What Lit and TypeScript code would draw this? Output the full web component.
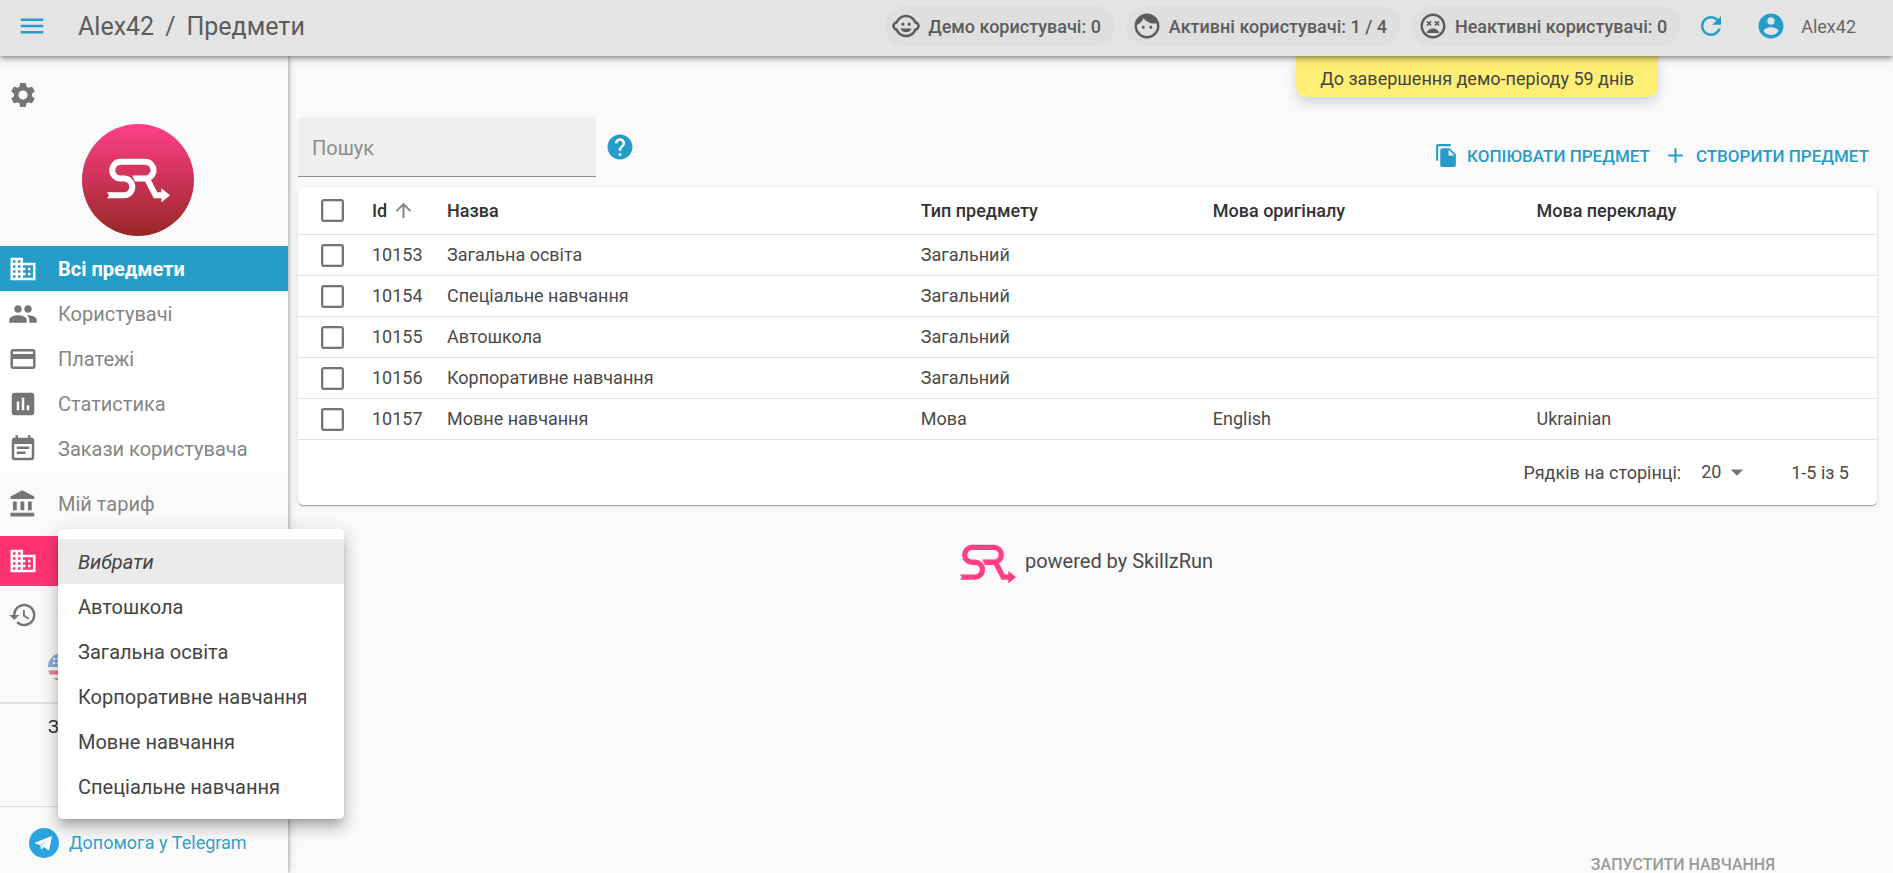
import { LitElement, html, css, svg, nothing } from "lit";
import { customElement, property, state } from "lit/decorators.js";
import { classMap } from "lit/directives/class-map.js";

const ICONS: Record<string, string> = {
  menu: "M3 18h18v-2H3v2zm0-5h18v-2H3v2zm0-7v2h18V6H3z",
  settings:
    "M19.14 12.94c.04-.3.06-.61.06-.94 0-.32-.02-.64-.07-.94l2.03-1.58c.18-.14.23-.41.12-.61l-1.92-3.32c-.12-.22-.37-.29-.59-.22l-2.39.96c-.5-.38-1.03-.7-1.62-.94l-.36-2.54c-.04-.24-.24-.41-.48-.41h-3.84c-.24 0-.43.17-.47.41l-.36 2.54c-.59.24-1.13.57-1.62.94l-2.39-.96c-.22-.08-.47 0-.59.22L2.74 8.87c-.12.21-.08.47.12.61l2.03 1.58c-.05.3-.09.63-.09.94s.02.64.07.94l-2.03 1.58c-.18.14-.23.41-.12.61l1.92 3.32c.12.22.37.29.59.22l2.39-.96c.5.38 1.03.7 1.62.94l.36 2.54c.05.24.24.41.48.41h3.84c.24 0 .44-.17.47-.41l.36-2.54c.59-.24 1.13-.56 1.62-.94l2.39.96c.22.08.47 0 .59-.22l1.92-3.32c.12-.22.07-.47-.12-.61l-2.01-1.58zM12 15.6c-1.98 0-3.6-1.62-3.6-3.6s1.62-3.6 3.6-3.6 3.6 1.62 3.6 3.6-1.62 3.6-3.6 3.6z",
  business:
    "M12 7V3H2v18h20V7H12zM6 19H4v-2h2v2zm0-4H4v-2h2v2zm0-4H4V9h2v2zm0-4H4V5h2v2zm4 12H8v-2h2v2zm0-4H8v-2h2v2zm0-4H8V9h2v2zm0-4H8V5h2v2zm10 12h-8v-2h2v-2h-2v-2h2v-2h-2V9h8v10zm-2-8h-2v2h2v-2zm0 4h-2v2h2v-2z",
  people:
    "M16 11c1.66 0 2.99-1.34 2.99-3S17.66 5 16 5c-1.66 0-3 1.34-3 3s1.34 3 3 3zm-8 0c1.66 0 2.99-1.34 2.99-3S9.66 5 8 5C6.34 5 5 6.34 5 8s1.34 3 3 3zm0 2c-2.33 0-7 1.17-7 3.5V19h14v-2.5c0-2.33-4.67-3.5-7-3.5zm8 0c-.29 0-.62.02-.97.05 1.16.84 1.97 1.97 1.97 3.45V19h6v-2.5c0-2.33-4.67-3.5-7-3.5z",
  payment:
    "M20 4H4c-1.11 0-1.99.89-1.99 2L2 18c0 1.11.89 2 2 2h16c1.11 0 2-.89 2-2V6c0-1.11-.89-2-2-2zm0 14H4v-6h16v6zm0-10H4V6h16v2z",
  assessment:
    "M19 3H5c-1.1 0-2 .9-2 2v14c0 1.1.9 2 2 2h14c1.1 0 2-.9 2-2V5c0-1.1-.9-2-2-2zM9 17H7v-7h2v7zm4 0h-2V7h2v10zm4 0h-2v-4h2v4z",
  eventNote:
    "M17 10H7v2h10v-2zm2-7h-1V1h-2v2H8V1H6v2H5c-1.11 0-1.99.9-1.99 2L3 19c0 1.1.89 2 2 2h14c1.1 0 2-.9 2-2V5c0-1.1-.9-2-2-2zm0 16H5V8h14v11zm-5-5H7v2h7v-2z",
  bank: "M4 10v7h3v-7H4zm6 0v7h3v-7h-3zM2 22h19v-3H2v3zm14-12v7h3v-7h-3zm-4.5-9L2 6v2h19V6l-9.5-5z",
  history:
    "M13 3c-4.97 0-9 4.03-9 9H1l3.89 3.89.07.14L9 12H6c0-3.87 3.13-7 7-7s7 3.13 7 7-3.13 7-7 7c-1.93 0-3.68-.79-4.94-2.06l-1.42 1.42C8.27 19.99 10.51 21 13 21c4.97 0 9-4.03 9-9s-4.03-9-9-9zm-1 5v5l4.28 2.54.72-1.21-3.5-2.08V8H12z",
  childCare:
    "M14.5 9.25a1.25 1.25 0 100 2.5 1.25 1.25 0 000-2.5zm-5 0a1.25 1.25 0 100 2.5 1.25 1.25 0 000-2.5zM22.94 12.66c.04-.21.06-.43.06-.66s-.02-.45-.06-.66c-.25-1.51-1.36-2.74-2.81-3.17-.53-1.12-1.28-2.1-2.19-2.91C16.36 3.85 14.28 3 12 3s-4.36.85-5.94 2.26c-.92.81-1.67 1.8-2.19 2.91-1.45.43-2.56 1.65-2.81 3.17-.04.21-.06.43-.06.66s.02.45.06.66c.25 1.51 1.36 2.74 2.81 3.17.52 1.11 1.27 2.09 2.17 2.89C7.62 20.14 9.71 21 12 21s4.38-.86 5.97-2.28c.9-.8 1.65-1.79 2.17-2.89 1.44-.43 2.55-1.65 2.8-3.17zM19 14c-.1 0-.19-.02-.29-.03-.2.67-.49 1.29-.86 1.86C16.6 17.74 14.45 19 12 19s-4.6-1.26-5.85-3.17c-.37-.57-.66-1.19-.86-1.86-.1.01-.19.03-.29.03-1.1 0-2-.9-2-2s.9-2 2-2c.1 0 .19.02.29.03.2-.67.49-1.29.86-1.86C7.4 6.26 9.55 5 12 5s4.6 1.26 5.85 3.17c.37.57.66 1.19.86 1.86.1-.01.19-.03.29-.03 1.1 0 2 .9 2 2s-.9 2-2 2zM7.5 14c.76 1.77 2.49 3 4.5 3s3.74-1.23 4.5-3h-9z",
  face: "M9 11.75c-.69 0-1.25.56-1.25 1.25s.56 1.25 1.25 1.25 1.25-.56 1.25-1.25-.56-1.25-1.25-1.25zm6 0c-.69 0-1.25.56-1.25 1.25s.56 1.25 1.25 1.25 1.25-.56 1.25-1.25-.56-1.25-1.25-1.25zM12 2C6.48 2 2 6.48 2 12s4.48 10 10 10 10-4.48 10-10S17.52 2 12 2zm0 18c-4.41 0-8-3.59-8-8 0-.29.02-.58.05-.86 2.36-1.05 4.23-2.98 5.21-5.37C11.07 8.33 14.05 10 17.42 10c.78 0 1.53-.09 2.25-.26.21.71.33 1.47.33 2.26 0 4.41-3.59 8-8 8z",
  dissatisfied:
    "M11.99 2C6.47 2 2 6.48 2 12s4.47 10 9.99 10C17.52 22 22 17.52 22 12S17.52 2 11.99 2zM12 20c-4.42 0-8-3.58-8-8s3.58-8 8-8 8 3.58 8 8-3.58 8-8 8zM17.3 8.7l-.9-.9-1.2 1.2-1.2-1.2-.9.9 1.2 1.2-1.2 1.2.9.9 1.2-1.2 1.2 1.2.9-.9-1.2-1.2zM10.9 8.7l-.9-.9-1.2 1.2-1.2-1.2-.9.9 1.2 1.2-1.2 1.2.9.9 1.2-1.2 1.2 1.2.9-.9-1.2-1.2zM12 14c-2.33 0-4.31 1.46-5.11 3.5h10.22c-.8-2.04-2.78-3.5-5.11-3.5z",
  refresh:
    "M17.65 6.35C16.2 4.9 14.21 4 12 4c-4.42 0-7.99 3.58-7.99 8s3.57 8 7.99 8c3.73 0 6.84-2.55 7.73-6h-2.08c-.82 2.33-3.04 4-5.65 4-3.31 0-6-2.69-6-6s2.69-6 6-6c1.66 0 3.14.69 4.22 1.78L13 11h7V4l-2.35 2.35z",
  account:
    "M12 2C6.48 2 2 6.48 2 12s4.48 10 10 10 10-4.48 10-10S17.52 2 12 2zm0 3c1.66 0 3 1.34 3 3s-1.34 3-3 3-3-1.34-3-3 1.34-3 3-3zm0 14.2c-2.5 0-4.71-1.28-6-3.22.03-1.99 4-3.08 6-3.08 1.99 0 5.97 1.09 6 3.08-1.29 1.94-3.5 3.22-6 3.22z",
  help: "M12 2C6.48 2 2 6.48 2 12s4.48 10 10 10 10-4.48 10-10S17.52 2 12 2zm1 17h-2v-2h2v2zm2.07-7.75l-.9.92C13.45 12.9 13 13.5 13 15h-2v-.5c0-1.1.45-2.1 1.17-2.83l1.24-1.26c.37-.36.59-.86.59-1.41 0-1.1-.9-2-2-2s-2 .9-2 2H8c0-2.21 1.79-4 4-4s4 1.79 4 4c0 .88-.36 1.68-.93 2.25z",
  copy: "M16 1H4c-1.1 0-2 .9-2 2v14h2V3h12V1zm-1 4l6 6v10c0 1.1-.9 2-2 2H7.99C6.89 23 6 22.1 6 21l.01-14c0-1.1.89-2 1.99-2h7zm-1 7h5.5L14 6.5V12z",
  add: "M19 13h-6v6h-2v-6H5v-2h6V5h2v6h6v2z",
  arrowUp: "M4 12l1.41 1.41L11 7.83V20h2V7.83l5.58 5.59L20 12l-8-8-8 8z",
  dropDown: "M7 10l5 5 5-5z",
};

@customElement("ui-icon")
class UiIcon extends LitElement {
  @property() name = "";
  @property({ type: Number }) size = 30;

  static styles = css`
    :host {
      display: inline-flex;
      flex: none;
    }
    svg {
      display: block;
      fill: currentColor;
    }
  `;

  render() {
    return html`<svg viewBox="0 0 24 24" width=${this.size} height=${this.size} aria-hidden="true">
      ${svg`<path d=${ICONS[this.name] ?? ""}></path>`}
    </svg>`;
  }
}

@customElement("brand-mark")
class BrandMark extends LitElement {
  static styles = css`
    :host {
      display: block;
    }
    svg {
      display: block;
      width: 100%;
    }
    .line {
      fill: none;
      stroke: currentColor;
      stroke-width: 18;
    }
    .solid {
      fill: currentColor;
    }
  `;

  render() {
    return html`<svg viewBox="96 112 190 134" aria-hidden="true">
      <path
        class="line"
        d="M108 224.5H147a25.25 25.25 0 0 0 0-50.5H137a25.25 25.25 0 0 1 0-50.5H211a25.25 25.25 0 0 1 0 50.5H182"
      ></path>
      <path class="line" d="M214 170L242.5 224.5H264"></path>
      <path class="solid" d="M96 215.5H110V233.5H96L102 225ZM260 203L286 224.5L260 246ZM172 165H184V183H180Z"></path>
    </svg>`;
  }
}

interface NavItem {
  icon: string;
  label: string;
}

@customElement("app-sidebar")
class AppSidebar extends LitElement {
  @state() private active = 0;

  private items: NavItem[] = [
    { icon: "business", label: "Всі предмети" },
    { icon: "people", label: "Користувачі" },
    { icon: "payment", label: "Платежі" },
    { icon: "assessment", label: "Статистика" },
    { icon: "eventNote", label: "Закази користувача" },
  ];

  private options = [
    "Вибрати",
    "Автошкола",
    "Загальна освіта",
    "Корпоративне навчання",
    "Мовне навчання",
    "Спеціальне навчання",
  ];

  static styles = css`
    :host {
      display: block;
      position: relative;
      z-index: 1;
      background: #fafafa;
      color: #757575;
      box-shadow: 1px 0 3px rgba(0, 0, 0, 0.25), 2px 0 10px rgba(0, 0, 0, 0.1);
    }
    button {
      font: inherit;
      color: inherit;
      background: none;
      border: 0;
      padding: 0;
      cursor: pointer;
    }
    a {
      color: inherit;
      text-decoration: none;
    }
    .gear {
      display: flex;
      padding: 24px 8px 0;
    }
    .logo {
      display: grid;
      place-items: center;
      width: 112px;
      height: 112px;
      margin: 14px 0 10px 82px;
      border-radius: 50%;
      color: #fff;
      background: linear-gradient(#ff4088, #982626);
    }
    .logo brand-mark {
      width: 63px;
    }
    .nav {
      background: #fff;
    }
    .item {
      display: flex;
      align-items: center;
      gap: 20px;
      height: 45px;
      padding: 0 8px;
      font-size: 20px;
      line-height: 30px;
    }
    .label {
      color: #858585;
    }
    .item.active {
      background: #269dc9;
      color: #fff;
      font-weight: 700;
    }
    .item.active .label {
      color: #fff;
    }
    .item.plan {
      height: 65px;
    }
    .picker {
      position: relative;
      z-index: 2;
      height: 50px;
      background: #ff3374;
      color: #fff;
    }
    .opener {
      display: flex;
      align-items: center;
      width: 100%;
      height: 100%;
      padding: 0 8px;
    }
    .listbox {
      position: absolute;
      top: -7px;
      left: 58px;
      width: 286px;
      margin: 0;
      padding: 10px 0;
      list-style: none;
      background: #fff;
      color: #444;
      border-radius: 5px;
      box-shadow: 0 6px 7px -4px rgba(0, 0, 0, 0.2), 0 10px 13px 1px rgba(0, 0, 0, 0.14),
        0 4px 18px 3px rgba(0, 0, 0, 0.12);
    }
    .option {
      display: block;
      width: 100%;
      height: 45px;
      padding: 0 20px;
      text-align: left;
      font-size: 20px;
      line-height: 30px;
    }
    .option.selected {
      background: #ebebeb;
      font-style: italic;
    }
    .item.history {
      height: 58px;
    }
    .langs {
      height: 60px;
      padding: 9px 48px 0;
      box-sizing: border-box;
      border-bottom: 2px solid #e0e0e0;
    }
    .flag {
      display: block;
      opacity: 0.5;
    }
    .note {
      height: 103px;
      box-sizing: border-box;
      margin: 0;
      padding: 10px 48px;
      border-bottom: 1px solid #dcdcdc;
      color: #333;
      font-size: 18px;
      line-height: 26px;
    }
    .telegram {
      display: flex;
      align-items: center;
      gap: 10px;
      padding: 21px 29px;
      color: #35a0cc;
      font-size: 18px;
      line-height: 30px;
    }
  `;

  render() {
    return html`
      <button class="gear" aria-label="Налаштування"><ui-icon name="settings"></ui-icon></button>
      <div class="logo"><brand-mark></brand-mark></div>
      <nav class="nav">
        ${this.items.map(
          (item, i) => html`<a
            href="#"
            class=${classMap({ item: true, active: i === this.active })}
            @click=${(e: Event) => {
              e.preventDefault();
              this.active = i;
            }}
            ><ui-icon name=${item.icon}></ui-icon><span class="label">${item.label}</span></a
          >`
        )}
      </nav>
      <a class="item plan" href="#"><ui-icon name="bank"></ui-icon><span class="label">Мій тариф</span></a>
      <div class="picker">
        <button class="opener" aria-haspopup="listbox" aria-expanded="true" aria-label="Предмет">
          <ui-icon name="business"></ui-icon>
        </button>
        <ul class="listbox" role="listbox">
          ${this.options.map(
            (o, i) => html`<li role="presentation">
              <button
                role="option"
                aria-selected=${i === 0 ? "true" : "false"}
                class=${classMap({ option: true, selected: i === 0 })}
              >
                ${o}
              </button>
            </li>`
          )}
        </ul>
      </div>
      <a class="item history" href="#" aria-label="Історія"><ui-icon name="history"></ui-icon></a>
      <div class="langs">
        <svg class="flag" viewBox="0 0 28 28" width="28" height="28" aria-hidden="true">
          <clipPath id="round"><circle cx="14" cy="14" r="14"></circle></clipPath>
          <g clip-path="url(#round)">
            <path fill="#fff" d="M0 0h28v28H0z"></path>
            <path fill="#d80027" d="M0 17.5h28v4H0zM0 25h28v3H0zM14 3h14v4H14zM14 10h14v4H14z"></path>
            <path fill="#1f62c4" d="M0 0h14v14H0z"></path>
            <path fill="#fff" d="M5 5h2v2H5zM9 5h2v2H9zM5 9h2v2H5zM9 9h2v2H9z"></path>
          </g>
        </svg>
      </div>
      <p class="note">З</p>
      <a class="telegram" href="#">
        <svg viewBox="0 0 30 30" width="30" height="30" aria-hidden="true">
          <circle cx="15" cy="15" r="15" fill="#2aa3e0"></circle>
          <path
            fill="#fff"
            d="M6.2 14.6L21.6 8.4C22.5 8.1 22.9 8.6 22.7 9.4L20.3 21.3C20.1 22.2 19.5 22.4 18.8 22L14.8 19L12.9 20.9C12.5 21.3 12 21.2 11.9 20.6L11 17.1L6.3 15.6C5.6 15.4 5.6 14.9 6.2 14.6Z"
          ></path>
          <path fill="#b5d8ee" d="M11 17.1L19.6 11.3L13.2 17.8L12.3 21.1L11.9 20.6Z"></path>
        </svg>
        <span>Допомога у Telegram</span>
      </a>
    `;
  }
}

interface Subject {
  id: number;
  name: string;
  type: string;
  source?: string;
  target?: string;
}

@customElement("subjects-page")
class SubjectsPage extends LitElement {
  private rows: Subject[] = [
    { id: 10153, name: "Загальна освіта", type: "Загальний" },
    { id: 10154, name: "Спеціальне навчання", type: "Загальний" },
    { id: 10155, name: "Автошкола", type: "Загальний" },
    { id: 10156, name: "Корпоративне навчання", type: "Загальний" },
    { id: 10157, name: "Мовне навчання", type: "Мова", source: "English", target: "Ukrainian" },
  ];

  static styles = css`
    :host {
      display: flex;
      flex-direction: column;
      padding: 61px 16px 0 10px;
      box-sizing: border-box;
      color: #4a4a4a;
      font-size: 18px;
      line-height: 26px;
    }
    button {
      font: inherit;
      color: inherit;
      background: none;
      border: 0;
      padding: 0;
      cursor: pointer;
    }
    .toolbar {
      display: flex;
      align-items: center;
      color: #269dc9;
    }
    .search {
      width: 298px;
      height: 60px;
      box-sizing: border-box;
      padding: 2px 14px 0;
      border: 0;
      border-bottom: 1px solid #8f8f8f;
      border-radius: 5px 5px 0 0;
      background: #efefef;
      color: #333;
      font: inherit;
      font-size: 20px;
      outline: 0;
    }
    .search::placeholder {
      color: #8c8c8c;
      opacity: 1;
    }
    .help {
      display: flex;
      margin-left: 9px;
    }
    .actions {
      display: flex;
      gap: 13px;
      margin: 17px 8px 0 auto;
    }
    .action {
      display: flex;
      align-items: center;
      gap: 8px;
      font-size: 17px;
      font-weight: 500;
      text-transform: uppercase;
    }
    .card {
      margin-top: 10px;
      background: #fff;
      border-radius: 5px;
      box-shadow: 0 2px 1px -1px rgba(0, 0, 0, 0.2), 0 1px 1px rgba(0, 0, 0, 0.14),
        0 1px 4px rgba(0, 0, 0, 0.12);
    }
    table {
      width: 100%;
      table-layout: fixed;
      border-collapse: collapse;
    }
    .c-check {
      width: 74px;
    }
    .c-id {
      width: 75px;
    }
    .c-name {
      width: 30%;
    }
    .c-type {
      width: 18.5%;
    }
    .c-source {
      width: 20.5%;
    }
    th,
    td {
      height: 40px;
      padding: 0;
      border-bottom: 1px solid #e2e2e2;
      text-align: left;
      font-weight: 400;
    }
    th {
      height: 47px;
      color: #333;
      font-weight: 500;
    }
    .sort {
      display: flex;
      align-items: center;
      gap: 5px;
    }
    .sort ui-icon {
      color: #858585;
    }
    .box {
      display: block;
      width: 23px;
      height: 23px;
      box-sizing: border-box;
      margin: 0 0 0 23px;
      appearance: none;
      border: 2px solid #757575;
      border-radius: 3px;
      box-shadow: inset 0 0 0 1px #d4d4d4;
    }
    .box:checked {
      background: #269dc9;
    }
    .pager {
      display: flex;
      align-items: center;
      justify-content: flex-end;
      height: 65px;
      padding: 0 28px;
    }
    .rows {
      display: flex;
      align-items: center;
    }
    .size {
      display: flex;
      align-items: center;
      margin: 0 39px 2px 20px;
    }
    .size select {
      appearance: none;
      width: 49px;
      margin-right: -28px;
      padding: 0;
      border: 0;
      background: none;
      color: inherit;
      font: inherit;
      outline: 0;
    }
    .size ui-icon {
      color: #757575;
      pointer-events: none;
    }
    .powered {
      display: flex;
      align-items: center;
      justify-content: center;
      gap: 9px;
      margin-top: 34px;
      padding-right: 2px;
      font-size: 20px;
      line-height: 36px;
    }
    .powered brand-mark {
      width: 56px;
      margin-top: 5px;
      color: #ff4088;
    }
    .launch {
      align-self: flex-end;
      margin: auto 102px 0 0;
      padding-top: 8px;
      color: #9b9b9b;
      font-size: 16px;
      line-height: 16px;
      font-weight: 500;
      text-transform: uppercase;
    }
  `;

  render() {
    return html`
      <div class="toolbar">
        <input class="search" type="search" placeholder="Пошук" aria-label="Пошук" />
        <button class="help" aria-label="Допомога"><ui-icon name="help"></ui-icon></button>
        <div class="actions">
          <button class="action"><ui-icon name="copy" size="25"></ui-icon>Копіювати предмет</button>
          <button class="action"><ui-icon name="add" size="25"></ui-icon>Створити предмет</button>
        </div>
      </div>
      <div class="card">
        <table>
          <colgroup>
            <col class="c-check" />
            <col class="c-id" />
            <col class="c-name" />
            <col class="c-type" />
            <col class="c-source" />
            <col />
          </colgroup>
          <thead>
            <tr>
              <th><input class="box" type="checkbox" aria-label="Вибрати всі" /></th>
              <th aria-sort="ascending">
                <button class="sort">Id<ui-icon name="arrowUp" size="23"></ui-icon></button>
              </th>
              <th>Назва</th>
              <th>Тип предмету</th>
              <th>Мова оригіналу</th>
              <th>Мова перекладу</th>
            </tr>
          </thead>
          <tbody>
            ${this.rows.map(
              (r) => html`<tr>
                <td><input class="box" type="checkbox" aria-label=${r.name} /></td>
                <td>${r.id}</td>
                <td>${r.name}</td>
                <td>${r.type}</td>
                <td>${r.source ?? nothing}</td>
                <td>${r.target ?? nothing}</td>
              </tr>`
            )}
          </tbody>
        </table>
        <div class="pager">
          <label class="rows" for="size">Рядків на сторінці:</label>
          <span class="size">
            <select id="size">
              <option>20</option>
            </select>
            <ui-icon name="dropDown"></ui-icon>
          </span>
          <span>1-5 із 5</span>
        </div>
      </div>
      <div class="powered"><brand-mark></brand-mark><span>powered by SkillzRun</span></div>
      <button class="launch">Запустити навчання</button>
    `;
  }
}

@customElement("app-root")
class AppRoot extends LitElement {
  private chips = [
    { icon: "childCare", label: "Демо користувачі: 0" },
    { icon: "face", label: "Активні користувачі: 1 / 4" },
    { icon: "dissatisfied", label: "Неактивні користувачі: 0" },
  ];

  static styles = css`
    :host {
      display: flex;
      flex-direction: column;
      position: relative;
      height: 100vh;
      overflow: hidden;
      background: #fafafa;
      font-family: Roboto, "Liberation Sans", sans-serif;
    }
    button {
      display: flex;
      font: inherit;
      background: none;
      border: 0;
      padding: 0;
      color: #269dc9;
      cursor: pointer;
    }
    .bar {
      display: flex;
      align-items: center;
      flex: none;
      position: relative;
      z-index: 3;
      height: 56px;
      box-sizing: border-box;
      padding: 0 37px 4px 17px;
      background: #e4e4e4;
      color: #666;
      font-size: 18px;
      box-shadow: 0 2px 5px rgba(0, 0, 0, 0.4), 0 4px 10px rgba(0, 0, 0, 0.1);
    }
    .crumbs {
      display: flex;
      gap: 11px;
      margin: 0 auto 0 31px;
      padding-top: 2px;
      color: #5c5c5c;
      font-size: 25px;
      font-weight: 400;
      line-height: 40px;
    }
    .chips {
      display: flex;
      gap: 11px;
    }
    .chip {
      display: flex;
      align-items: center;
      gap: 7px;
      height: 40px;
      padding: 0 14px 0 6px;
      border-radius: 20px;
      background: #dfdfdf;
      color: #5c5c5c;
      font-weight: 500;
    }
    .refresh {
      margin: 0 30px 0 15px;
    }
    .user {
      margin-left: 15px;
    }
    .banner {
      position: absolute;
      z-index: 2;
      top: 56px;
      right: 235px;
      padding: 11px 24px 6px;
      border-radius: 0 0 10px 10px;
      background: #ffef75;
      color: #444;
      font-size: 18px;
      line-height: 24px;
      box-shadow: 0 6px 12px rgba(90, 110, 140, 0.25);
    }
    .body {
      display: grid;
      grid-template-columns: 288px minmax(0, 1fr);
      grid-template-rows: minmax(0, 1fr);
      flex: 1;
      min-height: 0;
    }
  `;

  render() {
    return html`
      <header class="bar">
        <button aria-label="Меню"><ui-icon name="menu"></ui-icon></button>
        <h1 class="crumbs"><span>Alex42</span><span>/</span><span>Предмети</span></h1>
        <div class="chips">
          ${this.chips.map((c) => html`<span class="chip"><ui-icon name=${c.icon}></ui-icon>${c.label}</span>`)}
        </div>
        <button class="refresh" aria-label="Оновити"><ui-icon name="refresh"></ui-icon></button>
        <button aria-label="Профіль"><ui-icon name="account"></ui-icon></button>
        <span class="user">Alex42</span>
      </header>
      <div class="banner" role="status">До завершення демо-періоду 59 днів</div>
      <div class="body">
        <app-sidebar></app-sidebar>
        <subjects-page></subjects-page>
      </div>
    `;
  }
}
